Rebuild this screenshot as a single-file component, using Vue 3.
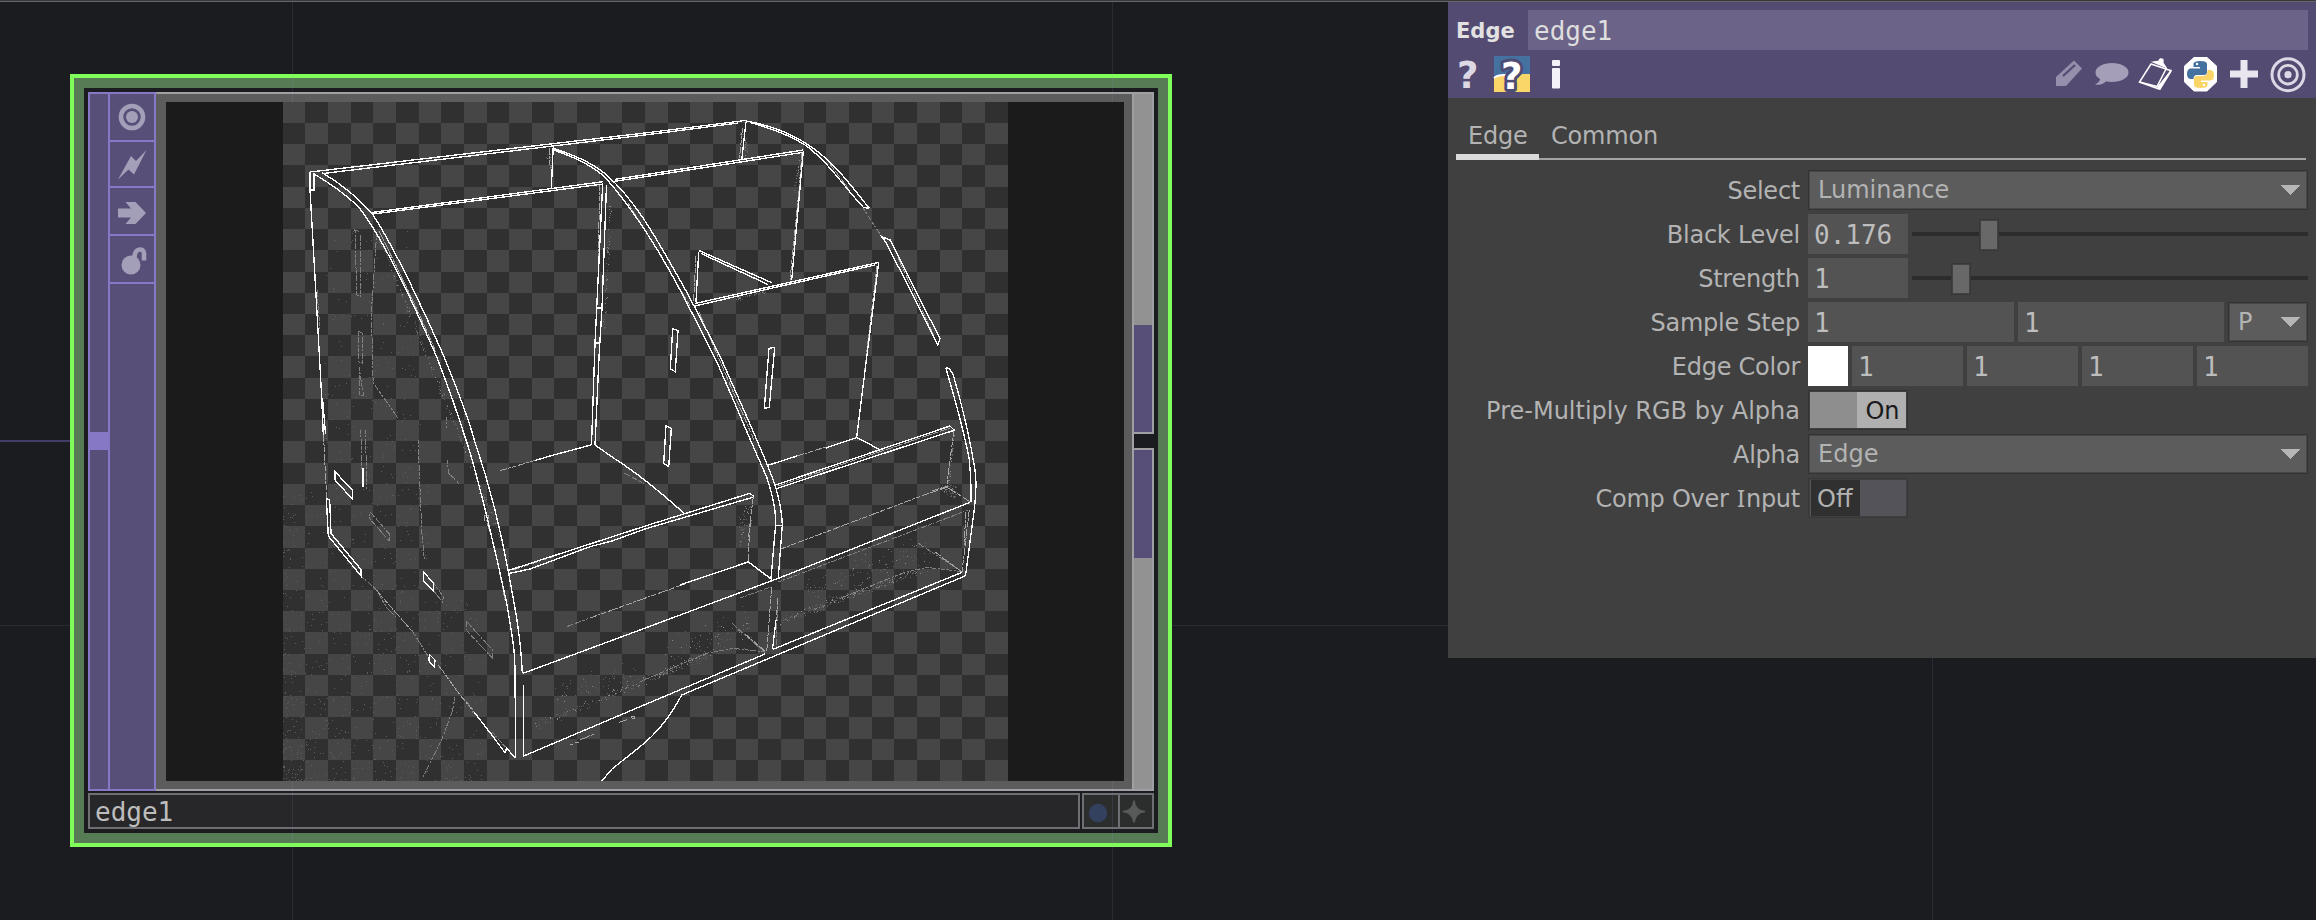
<script setup>
// Checkerboard behind the transparent parts of the viewer image
const edgesX = Array.from({ length: 33 }, (_, i) => Math.round(282.6 + 22.656 * i))
const edgesY = Array.from({ length: 33 }, (_, i) => Math.round(101.7 + 21.23 * i))
let checker = ''
for (let r = 0; r < 32; r++) {
  for (let c = r % 2; c < 32; c += 2) {
    checker += `M${edgesX[c]} ${edgesY[r]}H${edgesX[c + 1]}V${edgesY[r + 1]}H${edgesX[c]}Z`
  }
}

// Deterministic speckle
let seed = 7
const rnd = () => (seed = (seed * 16807) % 2147483647) / 2147483647
const dot = (x, y) => `M${Math.round(x)} ${Math.round(y)}h1v1h-1z`
let dust = ''
let grain = ''
for (let i = 0; i < 750; i++) {
  const x = 283 + 200 * Math.pow(rnd(), 1.5)
  const y = 781 - 300 * Math.pow(rnd(), 1.5)
  if (y < 781 && !(x > 430 && y < 600)) dust += dot(x, y)
}
for (let i = 0; i < 180; i++) dust += dot(325 + 95 * rnd(), 230 + 270 * rnd())
const band = (x1, y1, x2, y2, spread, n) => {
  for (let i = 0; i < n; i++) {
    const t = rnd()
    const s = (rnd() + rnd() - 1) * spread
    const d = dot(x1 + (x2 - x1) * t + rnd() * 2, y1 + (y2 - y1) * t + s)
    if (rnd() > 0.25) dust += d
    else grain += d
  }
}
band(533, 726, 640, 682, 5, 110)
band(555, 692, 640, 672, 14, 60)
band(640, 682, 707, 654, 5, 110)
band(665, 655, 750, 625, 24, 90)
band(778, 622, 840, 598, 5, 110)
band(840, 598, 926, 568, 4, 110)
band(800, 597, 930, 545, 22, 120)
band(738, 535, 750, 510, 18, 60)
band(940, 487, 955, 492, 8, 60)
band(952, 436, 947, 484, 5, 50)
band(740, 136, 746, 150, 16, 40)
band(545, 152, 552, 168, 12, 30)
band(799, 160, 793, 190, 12, 30)
band(376, 233, 500, 540, 5, 190)
band(735, 298, 765, 290, 4, 60)
band(610, 182, 603, 330, 12, 70)

const bright = [
  'M310 172L649 132.500L745 120.500', 'M323 173.500L649 134.500L738 123',
  'M310 172V190L315 277L321.700 397L323.300 435', 'M314 174V190H310', 'M322.500 398L325.500 434',
  'M321.700 172.300Q353 191 373 215C395 248 428 320 443.300 355C456 386 470 424 474.300 440C488 480 500 526 508.300 571.700C516 612 521 640 522.300 673.500',
  'M313 173.300Q340 189 358.300 206.700C385 240 417 312 436.700 357C450 391 459 418 466 440C477 472 497 558 506.700 603C513 640 515 650 515 675L515.700 758.300',
  'M523.300 685L523.700 756L640 706.700L765 654',
  'M522.500 673.500L640 630L778.300 578.300L970 502.300',
  'M681.700 695L965 576', 'M773 649.300L961.700 572.500',
  'M370 212.700L603 181.700', 'M373 214L603 184',
  'M615 179.300L640 175.500L803.300 150', 'M613 181.500L640 177.500L802 152.500',
  'M602.700 183L596.700 308.300L595 343.300L591.500 445', 'M606.500 185L602 308L599 357L595 445',
  'M596.700 308h5', 'M594.500 343h5',
  'M803.300 151L791.700 280',
  'M553.300 145L551.300 188.300',
  'M553.300 148.500Q588 159 606.700 175C640 205 660 246 681.700 283C703 322 714 345 721.700 360C742 406 762 450 773.300 480C780 500 782 512 782.300 525L778.300 577',
  'M553.300 150Q587 161 605 177.300C630 205 658 248 678.300 286.700C700 328 708 344 716.700 361.700C735 403 750 440 766.700 477C773 496 776 512 775.700 524L771 578.500',
  'M775 525.500h7',
  'M772.500 649.300L776 620',
  'M745 120.700Q780 127 805 142.700C834 161 848 182 869.300 208.300',
  'M750 122.500Q785 132 806.700 146C830 164 845 188 863.300 207.300L869 208.300',
  'M881.700 236.700L890 240C908 275 925 310 940 338.300L937.700 345L886.700 243.500Z',
  'M945.700 367.700L949.500 368.500L953.300 375C962 405 970 438 975 470Q977.500 486 973.300 516.700L965.500 576',
  'M945.700 367.700C954 395 966 440 969.300 460Q971.500 480 971 502.300',
  'M746 121.700L741.700 160',
  'M699.300 250.700L771.700 282.700', 'M701 253.500L768 284.500', 'M698.700 251.700L696 301.700',
  'M695 303.500L878.300 262.500V265L856.700 437.300', 'M695 306L768 289L875 265',
  'M766.700 465.700L797 456M826 448L856.700 437.500L879.300 449.300',
  'M774 485.500L950 426L954 430', 'M776.700 488.500L955 430',
  'M507.700 570.700L650 524.500L750 493.300L754 496.700', 'M509 573.500L530 569L590 546.700L612 541L645 529L752.700 497.300',
  'M748 561.700L771.700 579.300', 'M680 585L748 562',
  'M595 445L615 459Q645 478 684 513.300', 'M535 460.500L550 456L591 445',
  'M672.700 328.500L678 330.700L675.300 371.700L670.300 369Z',
  'M769 348.300L774.700 347.300L769.300 407.500L764.300 408.300Z',
  'M666 425.700L671.300 428.700L668.700 466.700L663.700 463.300Z',
  'M335 471.700L352.300 490V499L335 480Z',
  'M326.300 498.300L329.700 500L331 533.500L361 569.500V576L328.300 536Z',
  'M423.300 571.700L433.700 583.500V591L423.300 581Z',
  'M429.300 654.300L435 660L434.300 666.700L429 661Z',
  'M490.700 733.500L505 752.700L506.700 748.300L515.700 758.300',
  'M363 468V487', 'M474 712L490.700 733.500',
  'M681.700 695C670 717 655 735 640 746.700L612 769L601.700 781',
].join('')

const mid = [
  'M640 600L700 578.500', 'M590 618L640 600', 'M780 549.300L920 496.500L946.700 487.500',
  'M753.300 497.300L750 523L748 561.700', 'M748.500 562L766 576', 'M751 520L748 540',
  'M771.700 587L766.700 651.700', 'M778 598L776 620', 'M969.300 510L962 571.700', 'M966 512L964 545',
  'M954 430L950 460L946.700 487', 'M946.700 487L970 501.700', 'M932 491L948 486',
  'M802 153L799 190L790 280', 'M550 148L549.500 165', 'M742.500 128L739.500 158', 'M696 256L693.500 302',
  'M600 184L598 260', 'M877 266L864 375', 'M797 456L826 447', 'M500 470.700L535 460.500',
  'M376 590L411 630', 'M438.300 665L460 695L474 712', 'M935 552L962 572', 'M745 634L766 652',
  'M323.500 435L326.700 498', 'M381 235Q402 278 418 312', 'M379 231Q400 273 420 316L436 352',
  'M628 203L650 238L690 306', 'M699 312L722 366L754 440', 'M830 164L848 188', 'M898 258L934 336',
  'M513 570L590 544L612 537', 'M778 486L950 428', 'M580 740L594 734', 'M570 744h3M575 742h4', 'M619 722.500L627 719.500',
  'M496 554L505 600', 'M487 523L491 535', 'M484 515.500h4v4.500h-4z', 'M631 716h3v2h-3z',
].join('')

const faint = [
  'M355 230L360 231.700L361 296.700L356.700 295Z', 'M358.300 331.700L362.500 332.500V363L359 362Z', 'M359 367L363.500 395H360Z',
  'M360.700 430L362 470M365.500 430L366.700 489',
  'M376.700 233L371.700 307L372.300 367L373.300 383L398.300 418.500', 'M418 440L421.700 530L424.300 560',
  'M446.700 417V428M447.300 460L448.300 473L459.300 484',
  'M370 511.700L389.300 534V541L369.300 518.300Z', 'M433.700 583L443.300 596.700L442.700 602.300L433.700 591',
  'M466.700 621.700L492.700 650V658.300L466 630Z',
  'M361 576L376.700 590L386 607L396 617M411.700 630L428.300 656.700',
  'M455 696.700L452.700 710L441.700 740L421.700 779.500', 'M460 695L472 708V714', 'M492 732L508 750',
  'M317 290L320 330', 'M863 208L881.700 236.700',
  'M566.700 626.700L590 618', 'M778.300 582L968.300 510', 'M740 598L771 587',
  'M731.700 623L765 652.700', 'M765 652L733.300 648.300L706.700 653.300L640 681.700', 'M918.300 543.300L961 571',
  'M961 571.500L926.700 567.300L903 573L840 598.300',
  'M624 473L645 484', 'M778 598L776 648',
].join('')

const rows = [
  { label: 'Select', kind: 'menu', value: 'Luminance' },
  { label: 'Black Level', kind: 'slider', value: '0.176', pos: 67 },
  { label: 'Strength', kind: 'slider', value: '1', pos: 39 },
  { label: 'Sample Step', kind: 'step' },
  { label: 'Edge Color', kind: 'color' },
  { label: 'Pre-Multiply RGB by Alpha', kind: 'on' },
  { label: 'Alpha', kind: 'menu', value: 'Edge' },
  { label: 'Comp Over Input', kind: 'off' },
]
</script>

<template>
  <div class="network">
    <div class="h"></div>
    <div class="wire"></div>
    <div class="node">
      <div class="node-inner">
        <div class="body">
          <div class="input-strip"><div class="connector"></div></div>
          <div class="flags">
            <div class="flag f1">
              <svg width="44" height="46" viewBox="0 0 44 46"><g fill="none" stroke="#a49fb8"><circle cx="22" cy="23" r="11" stroke-width="4.600" /></g><circle cx="22" cy="23" r="6" fill="#a49fb8" /></svg>
            </div>
            <div class="flag f2">
              <svg width="44" height="44" viewBox="0 0 44 44"><path d="M8 37.500L21 14L26 19L36.500 8L24 32.500L18.500 27.500Z" fill="#a49fb8" /></svg>
            </div>
            <div class="flag f3">
              <svg width="44" height="46" viewBox="0 0 44 46"><path d="M8 20.500H21L15.500 14H25.500L36 25L25.500 36H15.500L21 29.500H8Z" fill="#a49fb8" /></svg>
            </div>
            <div class="flag f4">
              <svg width="44" height="46" viewBox="0 0 44 46"><circle cx="21" cy="29" r="9.500" fill="#a49fb8" /><path d="M24.500 23C24 11 34 12 34 17V24.500" fill="none" stroke="#a49fb8" stroke-width="4.600" /></svg>
            </div>
          </div>
          <div class="frame">
            <div class="view">
              <svg class="edges" width="725" height="679" viewBox="283 102 725 679">
                <rect x="283" y="102" width="725" height="679" fill="#303030" />
                <path :d="checker" fill="#464646" shape-rendering="crispEdges" />
                <path :d="dust" fill="#5e5e5e" shape-rendering="crispEdges" />
                <path :d="grain" fill="#888" shape-rendering="crispEdges" />
                <path :d="faint" fill="none" stroke="#808080" stroke-width="1" stroke-dasharray="4 1 2 2 6 1" shape-rendering="crispEdges" />
                <path :d="mid" fill="none" stroke="#a6a6a6" stroke-width="1" stroke-dasharray="7 1 3 1 5 2" shape-rendering="crispEdges" />
                <path :d="bright" fill="none" stroke="#fff" stroke-width="1.350" shape-rendering="crispEdges" />
              </svg>
            </div>
          </div>
          <div class="outputs">
            <div class="out top"><i></i></div>
            <div class="gap"></div>
            <div class="out bottom"><i></i></div>
          </div>
        </div>
        <div class="footer">
          <div class="name">edge1</div>
          <div class="buttons">
            <div class="btn"><svg width="34" height="32" viewBox="0 0 34 32"><circle cx="14" cy="18" r="9.200" fill="#33405e" /></svg></div>
            <div class="btn"><svg width="32" height="32" viewBox="0 0 32 32"><path d="M14 5.500Q15 16 25 16.500Q15 17.500 14 27.500Q13 17.500 3 16.500Q13 16 14 5.500Z" fill="#585a59" stroke="#585a59" stroke-width="1.500" /></svg></div>
          </div>
        </div>
      </div>
    </div>
    <div class="v v1"></div>
    <div class="v v2"></div>
    <div class="v v3"></div>
    <div class="topline"></div>

    <div class="panel">
      <div class="head">
        <div class="title">
          <span class="type">Edge</span>
          <span class="opname">edge1</span>
        </div>
        <div class="icons">
          <svg class="left" width="120" height="40" viewBox="1450 54 120 40">
            <text x="1457" y="88" class="q" fill="#dcd9e4">?</text>
            <rect x="1494" y="56" width="36" height="36" fill="#44719f" />
            <path d="M1494 92V78Q1498 75 1503 75H1517Q1520 75 1522 74H1530V92Z" fill="#fad567" />
            <path d="M1494 78Q1498 74.500 1506 75" stroke="#fff" stroke-width="2" fill="none" />
            <text x="1501" y="88.500" class="q" fill="#fff" stroke="#4e4b75" stroke-width="6" paint-order="stroke" stroke-linejoin="round">?</text>
            <rect x="1552" y="60" width="8" height="6" rx="1" fill="#f4f2f8" />
            <rect x="1552" y="68" width="8" height="20.500" rx="1" fill="#f4f2f8" />
          </svg>
          <svg class="right" width="260" height="40" viewBox="2050 54 260 40">
            <path d="M2056 77L2074 60.500L2082 68.500L2066 86H2056Z" fill="#958fab" />
            <path d="M2063 76L2075 65" stroke="#544b72" stroke-width="2.200" />
            <ellipse cx="2112" cy="72.500" rx="16.500" ry="9.500" fill="#a49eb8" />
            <path d="M2100 77Q2101 82 2095 84.500Q2103 86 2107 80Z" fill="#a49eb8" />
            <path d="M2151 64L2166 69L2157 86.500L2139.500 82Z" fill="none" stroke="#fff" stroke-width="1.500" />
            <path d="M2139.500 82L2159 89L2171 70.500L2165 69" fill="none" stroke="#fff" stroke-width="1.500" />
            <path d="M2158 87L2171 71L2160 89Z" fill="#fff" stroke="#fff" stroke-width="1.500" />
            <path d="M2153 62L2159 61Q2160 57.500 2163 59.500L2163 63L2166 67.500Z" fill="#fff" stroke="#fff" stroke-width="1.200" />
            <path d="M2194 57.500H2207L2216.500 66V82L2207 91H2194L2184.500 82V66Z" fill="#fff" stroke="#fff" stroke-linejoin="round" />
            <path d="M2193.500 63.500Q2194 61 2200 61Q2207 61 2207 64V72Q2207 75 2204 75H2197Q2193.500 75 2193.500 79H2190Q2187 78 2187 74Q2187 69 2190.500 68.500H2200V67H2193.500Z" fill="#44719f" />
            <path d="M2207.500 70H2211Q2214 71 2214 75Q2214 80 2210.500 80.500H2201V82H2207.500V85.500Q2207 88 2201 88Q2194 88 2194 85V79Q2194 76 2197 76H2204Q2207.500 75 2207.500 71Z" fill="#fad567" />
            <circle cx="2197" cy="64" r="1.200" fill="#fff" /><circle cx="2204" cy="85" r="1.200" fill="#fff" />
            <path d="M2244 60V88M2230 74H2258" stroke="#e9e6ef" stroke-width="7" />
            <g fill="none" stroke="#dcd8e5"><circle cx="2288" cy="74.700" r="16" stroke-width="3" /><circle cx="2288" cy="74.700" r="9.300" stroke-width="2.800" /></g>
            <circle cx="2288" cy="74.700" r="3.600" fill="#dcd8e5" />
          </svg>
        </div>
      </div>
      <div class="tabs">
        <div class="tab active">Edge</div>
        <div class="tab">Common</div>
      </div>
      <div class="params">
        <div v-for="r in rows" :key="r.label" class="row">
          <div v-if="r.kind === 'off'" class="label">Comp Over <span class="cap-i">I</span>nput</div>
          <div v-else class="label" :class="{ long: r.kind === 'on' }">{{ r.label }}</div>
          <div class="control">
            <div v-if="r.kind === 'menu'" class="menu"><span>{{ r.value }}</span><svg width="20" height="10"><path d="M0 0H19.500L9.700 10Z" fill="#b6b6b6" shape-rendering="crispEdges" /></svg></div>
            <template v-else-if="r.kind === 'slider'">
              <div class="field num">{{ r.value }}</div>
              <div class="track"><div class="handle" :style="{ left: r.pos + 'px' }"></div></div>
            </template>
            <template v-else-if="r.kind === 'step'">
              <div class="field">1</div>
              <div class="field">1</div>
              <div class="menu unit"><span>P</span><svg width="20" height="10"><path d="M0 0H19.500L9.700 10Z" fill="#b6b6b6" shape-rendering="crispEdges" /></svg></div>
            </template>
            <template v-else-if="r.kind === 'color'">
              <div class="swatch"></div>
              <div v-for="n in 4" :key="n" class="field">1</div>
            </template>
            <div v-else-if="r.kind === 'on'" class="toggle on"><i></i><b>On</b></div>
            <div v-else class="toggle off"><b>Off</b><i></i></div>
          </div>
        </div>
      </div>
    </div>
  </div>
</template>

<style>
html, body { background: #1b1c20; overflow: hidden; }
</style>

<style scoped>
.network { position: relative; width: 2316px; height: 920px; background: #1b1c20; overflow: hidden; font-family: "DejaVu Sans", Verdana, sans-serif; font-size: 24px; color: #b3b3b3; }
.network * { box-sizing: border-box; }
svg { display: block; overflow: visible; }
.edges { overflow: hidden; }
.v { position: absolute; top: 0; bottom: 0; width: 1px; background: rgba(150, 150, 190, .13); z-index: 1; }
.v1 { left: 292px; } .v2 { left: 1112px; } .v3 { left: 1932px; }
.h { position: absolute; left: 0; right: 0; top: 625px; height: 1px; background: rgba(150, 150, 190, .13); }
.topline { position: absolute; left: 0; right: 0; top: 0; height: 2px; background: #3a3a3e; border-bottom: 1px solid #66666a; z-index: 3; }
.wire { position: absolute; left: 0; top: 440px; width: 90px; height: 2px; background: #423d66; }

.node { position: absolute; left: 70px; top: 74px; width: 1102px; height: 773px; border: 4px solid #80ff5a; background: #567b55; padding: 10px; }
.node-inner { height: 745px; background: #1b1c20; padding: 4px; display: flex; flex-direction: column; gap: 2px; }
.body { display: flex; height: 699px; }
.input-strip { width: 20px; background: #584f78; border: 2px solid #8678c4; border-right: 0; padding-top: 338px; }
.connector { width: 19px; height: 18px; background: #8678c4; }
.flags { width: 48px; background: #584f78; border: 2px solid #8678c4; }
.flag { border-bottom: 2px solid #8678c4; }
.f1 { height: 48px; } .f2 { height: 46px; } .f3, .f4 { height: 48px; }
.frame { width: 976px; background: #5c5c5c; border: solid #a0a0a4; border-width: 2px 0; padding: 8px 8px 8px 10px; }
.view { position: relative; z-index: 2; height: 679px; background: #1b1b1b; padding-left: 117px; }
.outputs { width: 22px; display: flex; flex-direction: column; border-left: 2px solid #a0a0a4; }
.out { background: #929292; border: 2px solid #a0a0a4; border-left: 0; display: flex; flex-direction: column; }
.out i { display: block; background: #584f78; }
.top { height: 342px; justify-content: flex-end; } .top i { height: 107px; }
.gap { height: 14px; }
.bottom { flex: 1; } .bottom i { height: 108px; }
.footer { display: flex; gap: 2px; height: 36px; }
.name { width: 992px; border: 2px solid #6e6e73; background: #272729; padding-left: 5px; font: 26px/35px "DejaVu Sans Mono", monospace; color: #bdbdbd; }
.buttons { display: flex; width: 72px; border: 2px solid #6e6e73; background: #2c2e2e; }
.btn + .btn { border-left: 2px solid #6e6e73; }

.panel { position: absolute; left: 1448px; top: 2px; width: 868px; height: 656px; background: #404040; z-index: 3; }
.head { height: 96px; background: #544b72; padding: 8px 8px 0; }
.title { display: flex; height: 40px; }
.type { width: 72px; font-weight: 700; font-size: 21px; line-height: 42px; color: #e2e2e2; }
.opname { flex: 1; background: #6c6389; padding-left: 6px; font: 26px/42px "DejaVu Sans Mono", monospace; color: #dedede; }
.icons { display: flex; justify-content: space-between; margin: 4px -2px 0 -6px; }
.q { font: 700 37px "DejaVu Sans", sans-serif; }
.tabs { display: flex; height: 38px; margin: 24px 10px 0 8px; border-bottom: 2px solid #a3a5a3; line-height: 29px; }
.tab { height: 38px; padding: 0 12px; letter-spacing: -.2px; }
.active { width: 83px; border-bottom: 6px solid #dadada; }
.params { display: flex; flex-direction: column; gap: 4px; margin: 10px 8px 0; }
.row { display: flex; height: 40px; }
.label { width: 352px; padding-right: 8px; text-align: right; line-height: 42px; white-space: nowrap; letter-spacing: -.25px; }
.long { letter-spacing: 0; }
.cap-i { font-family: "Noto Sans", sans-serif; line-height: 1; padding: 0 1px; }
.control { display: flex; flex: 1; gap: 4px; }
.menu { flex: 1; display: flex; justify-content: space-between; align-items: center; height: 40px; border: 1px solid #333; box-shadow: inset 0 0 0 1px #484848; background: #5c5c5c; padding: 0 6px 0 9px; line-height: 40px; }
.unit { flex: 0 0 80px; }
.field { flex: 1; background: #535353; padding-left: 6px; font: 26px/42px "DejaVu Sans Mono", monospace; color: #bdbdbd; height: 40px; }
.num { flex: 0 0 100px; }
.track { position: relative; flex: 1; height: 4px; margin-top: 18px; background: #2c2c2c; }
.handle { position: absolute; top: -13px; width: 20px; height: 32px; border: 1px solid #383838; box-shadow: inset 0 0 0 1px #424242; background: #686868; }
.swatch { width: 40px; background: #fff; }
.toggle { display: flex; width: 100px; height: 40px; border: 1px solid #333; padding: 1px; line-height: 38px; }
.toggle b { font-weight: 400; height: 36px; }
.on i { width: 48px; background: #8e8e8e; }
.on b { width: 49px; background: #b0b0b0; color: #1a1a1a; padding-left: 8px; }
.off { border-color: #383838; }
.off b { width: 50px; background: #303030; border-left: 1px solid #55535a; padding-left: 6px; }
.off i { width: 46px; background: #55535a; }
</style>
